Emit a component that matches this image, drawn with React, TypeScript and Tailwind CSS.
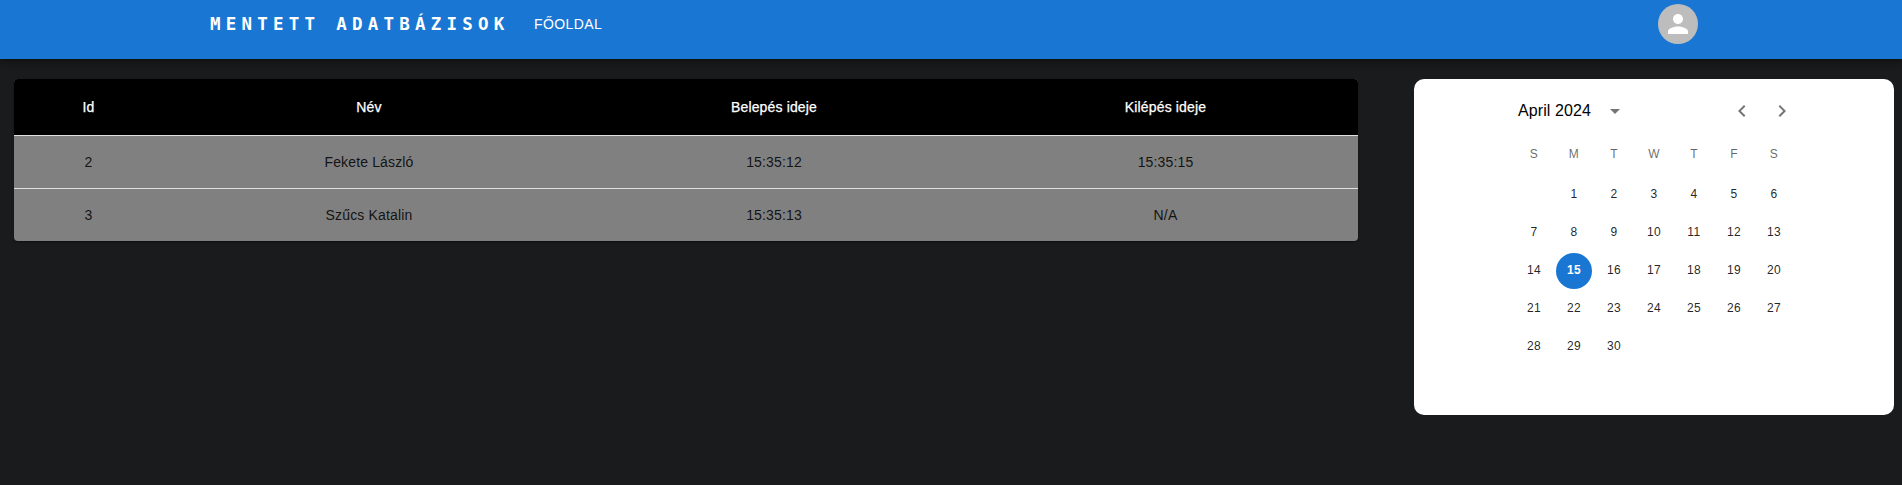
const people = [
  { id: 2, name: "Fekete László", entered: "15:35:12", left: "15:35:15" },
  { id: 3, name: "Szűcs Katalin", entered: "15:35:13", left: "N/A" },
];

const weekdays = ["S", "M", "T", "W", "T", "F", "S"];
const selectedDay = 15;
const weeks: (number | null)[][] = [0, 1, 2, 3, 4].map((week) =>
  weekdays.map((_, i) => {
    const day = week * 7 + i;
    return day >= 1 && day <= 30 ? day : null;
  })
);

function Icon({ d, className }: { d: string; className: string }) {
  return (
    <svg viewBox="0 0 24 24" className={className} fill="currentColor" aria-hidden="true">
      <path d={d} />
    </svg>
  );
}

function Header() {
  return (
    <header className="relative z-10 flex h-[59px] items-start bg-[#1976d2] pl-[210px] pr-[204px] text-white shadow-[0_2px_4px_-1px_rgba(0,0,0,0.2),0_4px_5px_0_rgba(0,0,0,0.14),0_1px_10px_0_rgba(0,0,0,0.12)]">
      <a className="mt-2 w-[324px] whitespace-nowrap font-['DejaVu_Sans_Mono',monospace] text-[17.5px] font-bold leading-8 tracking-[5.23px]">
        MENTETT ADATBÁZISOK
      </a>
      <a className="mt-3 text-sm leading-6 tracking-[0.4px]">FŐOLDAL</a>
      <div className="ml-auto mt-1 flex size-10 items-center justify-center rounded-full bg-[#bdbdbd]">
        <Icon
          className="size-[30px]"
          d="M12 12c2.21 0 4-1.79 4-4s-1.79-4-4-4-4 1.79-4 4 1.79 4 4 4zm0 2c-2.67 0-8 1.34-8 4v2h16v-2c0-2.66-5.33-4-8-4z"
        />
      </div>
    </header>
  );
}

function VisitTable() {
  return (
    <div className="w-[1344px] overflow-hidden rounded bg-[#808080] shadow-[0_2px_1px_-1px_rgba(0,0,0,0.2),0_1px_1px_0_rgba(0,0,0,0.14),0_1px_3px_0_rgba(0,0,0,0.12)]">
      <table className="w-full table-fixed border-separate border-spacing-0 text-center text-sm tracking-[0.15px]">
        <colgroup>
          <col className="w-[149px]" />
          <col className="w-[412px]" />
          <col className="w-[398px]" />
          <col className="w-[385px]" />
        </colgroup>
        <thead>
          <tr className="h-[57px] bg-black text-white">
            {["Id", "Név", "Belepés ideje", "Kilépés ideje"].map((title) => (
              <th
                key={title}
                className="border-b border-[#e0e0e0] p-0 font-medium [-webkit-text-stroke:0.25px_white]"
              >
                {title}
              </th>
            ))}
          </tr>
        </thead>
        <tbody className="text-black/87">
          {people.map((person, i) => (
            <tr key={person.id} className={i < people.length - 1 ? "h-[53px]" : "h-[52px]"}>
              {[person.id, person.name, person.entered, person.left].map((value, col) => (
                <td
                  key={col}
                  className={i < people.length - 1 ? "border-b border-[#e0e0e0] p-0" : "p-0"}
                >
                  {value}
                </td>
              ))}
            </tr>
          ))}
        </tbody>
      </table>
    </div>
  );
}

function Calendar() {
  return (
    <div className="flex h-[336px] w-[480px] justify-center rounded-[10px] bg-white">
      <div className="w-80">
        <div className="mt-3 flex h-10 items-center pl-6 pr-3">
          <span className="text-base font-medium tracking-[0.1px] text-black">April 2024</span>
          <Icon className="ml-3 size-6 text-black/54" d="M7 10l5 5 5-5z" />
          <div className="ml-auto flex gap-4 pr-2 text-black/54">
            <Icon className="size-6" d="M15.41 16.59L10.83 12l4.58-4.59L14 6l-6 6 6 6 1.41-1.41z" />
            <Icon className="size-6" d="M8.59 16.59L13.17 12 8.59 7.41 10 6l6 6-6 6-1.41-1.41z" />
          </div>
        </div>
        <div className="mt-[3px] grid grid-cols-7 px-5 text-xs tracking-[0.4px] text-black/60">
          {weekdays.map((day, i) => (
            <span key={i} className="flex h-10 items-center justify-center">
              {day}
            </span>
          ))}
        </div>
        <div className="mt-[3px] grid grid-cols-7 gap-y-0.5 px-5 text-xs tracking-[0.4px] text-black/87">
          {weeks.flat().map((day, i) => (
            <span key={i} className="flex h-9 justify-center">
              <span
                className={
                  day === selectedDay
                    ? "flex size-9 items-center justify-center rounded-full bg-[#1976d2] pb-0.5 font-bold text-white"
                    : "flex size-9 items-center justify-center pb-0.5"
                }
              >
                {day}
              </span>
            </span>
          ))}
        </div>
      </div>
    </div>
  );
}

export default function App() {
  return (
    <div className="h-[485px] overflow-hidden bg-[#1a1b1c] font-['Liberation_Sans',Arial,sans-serif]">
      <Header />
      <main className="flex items-start justify-between pl-[14px] pr-2 pt-5">
        <VisitTable />
        <Calendar />
      </main>
    </div>
  );
}
